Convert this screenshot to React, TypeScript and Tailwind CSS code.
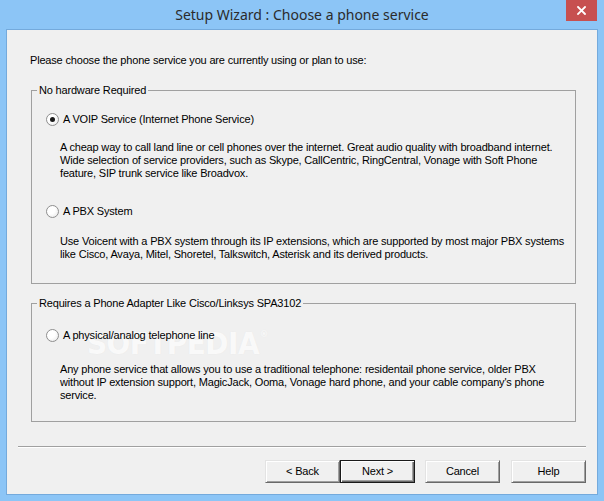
import React from 'react';

function Radio({ checked }: { checked?: boolean }) {
  return (
    <span className="w-[13px] h-[13px] rounded-full border border-[#8f8f8f] bg-[radial-gradient(circle_at_35%_35%,#ffffff_40%,#e4e4e4_100%)] flex items-center justify-center shrink-0">
      {checked && <span className="w-[5px] h-[5px] rounded-full bg-[#1a1a1a]" />}
    </span>
  );
}

function Option({ label, checked, mt }: { label: string; checked?: boolean; mt: string }) {
  return (
    <div className={`relative flex items-center h-[13px] pl-[14px] ${mt}`}>
      <Radio checked={checked} />
      <span className="ml-[4px] whitespace-nowrap">{label}</span>
    </div>
  );
}

function Desc({ lines, mt }: { lines: string[]; mt: string }) {
  return (
    <div className={`relative pl-[28px] ${mt}`}>
      {lines.map((l, i) => (
        <div key={i} className="whitespace-nowrap h-[13px]">{l}</div>
      ))}
    </div>
  );
}

function WinButton({ children, isDefault, className = '' }: { children: React.ReactNode; isDefault?: boolean; className?: string }) {
  const look = isDefault
    ? 'border border-[#1a1a1a] shadow-[inset_1px_1px_0_#ffffff,inset_-1px_-1px_0_#696969,inset_-2px_-2px_0_#a0a0a0]'
    : 'border border-t-[#e3e3e3] border-l-[#e3e3e3] border-b-[#696969] border-r-[#696969] shadow-[inset_1px_1px_0_#ffffff,inset_-1px_-1px_0_#a0a0a0]';
  return (
    <button className={`w-[75px] h-[23px] bg-[#f0f0f0] text-[11px] leading-[13px] tracking-[-0.18px] text-black flex items-center justify-center ${look} ${className}`}>
      {children}
    </button>
  );
}

export default function App() {
  return (
    <div className="w-[604px] h-[501px] bg-[#8cc5f6] flex flex-col font-['Liberation_Sans',Arial,sans-serif] text-[11px] leading-[13px] tracking-[-0.18px] text-black overflow-hidden">
      {/* Title bar */}
      <div className="h-[30px] shrink-0 grid grid-cols-[1fr_auto_1fr] items-start">
        <div />
        <div className="pt-[5px] text-[14px] leading-[20px] tracking-normal text-[#2b2b2b] font-['Noto_Sans',sans-serif] whitespace-nowrap">
          Setup Wizard : Choose a phone service
        </div>
        <div className="flex justify-end pr-[7px]">
          <div className="w-[31px] h-[21px] bg-[#c75050] flex items-center justify-center">
            <svg width="9" height="9" viewBox="0 0 9 9">
              <path d="M1 1 L8 8 M8 1 L1 8" stroke="#ffffff" strokeWidth="1.8" strokeLinecap="square" />
            </svg>
          </div>
        </div>
      </div>

      {/* Client area */}
      <div className="relative flex-1 mx-[7px] mb-[7px] bg-[#f0f0f0] shadow-[0_0_0_1px_#74aadc] flex flex-col">
        {/* watermark, drawn under the controls */}
        <div className="absolute left-[80px] top-[297px] flex items-start text-white/80 font-['DejaVu_Sans_Condensed',sans-serif] font-bold text-[31px] leading-[32px] tracking-[-0.5px] [text-shadow:0_0_1px_#e2e2e2] pointer-events-none select-none">
          SOFTPEDIA<span className="text-[9px] leading-[10px] mt-[2px] ml-[1px]">®</span>
        </div>

        <div className="relative pt-[24px] pl-[23px] whitespace-nowrap">
          Please choose the phone service you are currently using or plan to use:
        </div>

        <fieldset className="mt-[17px] ml-[24px] w-[545px] min-w-0 border border-[#a0a0a0] pb-[22px]">
          <legend className="ml-[5px] px-[2px] leading-[13px]">No hardware Required</legend>
          <Option label="A VOIP Service (Internet Phone Service)" checked mt="mt-[16px]" />
          <Desc
            mt="mt-[15px]"
            lines={[
              'A cheap way to call land line or cell phones over the internet. Great audio quality with broadband internet.',
              'Wide selection of service providers, such as Skype, CallCentric, RingCentral, Vonage with Soft Phone',
              'feature, SIP trunk service like Broadvox.',
            ]}
          />
          <Option label="A PBX System" mt="mt-[25px]" />
          <Desc
            mt="mt-[17px]"
            lines={[
              'Use Voicent with a PBX system through its IP extensions, which are supported by most major PBX systems',
              'like Cisco, Avaya, Mitel, Shoretel, Talkswitch, Asterisk and its derived products.',
            ]}
          />
        </fieldset>

        <fieldset className="mt-[13px] ml-[24px] w-[545px] min-w-0 border border-[#a0a0a0] pb-[19px]">
          <legend className="ml-[5px] px-[2px] leading-[13px]">Requires a Phone Adapter Like Cisco/Linksys SPA3102</legend>
          <Option label="A physical/analog telephone line" mt="mt-[19px]" />
          <Desc
            mt="mt-[21px]"
            lines={[
              'Any phone service that allows you to use a traditional telephone: residentail phone service, older PBX',
              "without IP extension support, MagicJack, Ooma, Vonage hard phone, and your cable company's phone",
              'service.',
            ]}
          />
        </fieldset>

        <div className="mt-[24px] mx-[11px] h-[2px] border-t border-t-[#a0a0a0] border-b border-b-white" />

        <div className="mt-[12px] mr-[11px] flex justify-end">
          <WinButton>&lt; Back</WinButton>
          <WinButton isDefault>Next &gt;</WinButton>
          <WinButton className="ml-[10px]">Cancel</WinButton>
          <WinButton className="ml-[11px]">Help</WinButton>
        </div>
      </div>
    </div>
  );
}
